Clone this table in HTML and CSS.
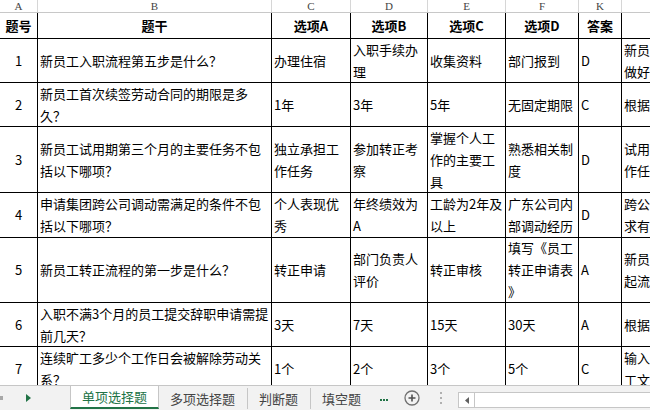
FILE: index.html
```html
<!DOCTYPE html>
<html lang="zh-CN">
<head>
<meta charset="utf-8">
<title>单项选择题</title>
<link rel="stylesheet" href="styles.css">
</head>
<body>
<div class="sheet">
  <div class="cols">
    <div>A</div><div>B</div><div>C</div><div>D</div><div>E</div><div>F</div><div>K</div><div></div>
  </div>
  <div class="grid">
    <div class="c h">题号</div><div class="c h">题干</div><div class="c h">选项A</div><div class="c h">选项B</div><div class="c h">选项C</div><div class="c h">选项D</div><div class="c h">答案</div><div class="c"></div>

    <div class="c n">1</div><div class="c">新员工入职流程第五步是什么？</div><div class="c">办理住宿</div><div class="c">入职手续办理</div><div class="c">收集资料</div><div class="c">部门报到</div><div class="c">D</div><div class="c l">新员工入职须先收集资料，<br>做好入职手续办理等事项</div>

    <div class="c n">2</div><div class="c">新员工首次续签劳动合同的期限是多久？</div><div class="c">1年</div><div class="c">3年</div><div class="c">5年</div><div class="c">无固定期限</div><div class="c">C</div><div class="c l">根据公司规定为无固定期限</div>

    <div class="c n">3</div><div class="c">新员工试用期第三个月的主要任务不包括以下哪项？</div><div class="c">独立承担工作任务</div><div class="c">参加转正考察</div><div class="c">掌握个人工作的主要工具</div><div class="c">熟悉相关制度</div><div class="c">D</div><div class="c l">试用期第三个月需独立承担工<br>作任务并参加转正考察</div>

    <div class="c n">4</div><div class="c">申请集团跨公司调动需满足的条件不包括以下哪项？</div><div class="c">个人表现优秀</div><div class="c">年终绩效为A</div><div class="c">工龄为2年及以上</div><div class="c">广东公司内部调动经历</div><div class="c">D</div><div class="c l">跨公司调动需满足工龄等要<br>求有关规定</div>

    <div class="c n">5</div><div class="c">新员工转正流程的第一步是什么？</div><div class="c">转正申请</div><div class="c">部门负责人评价</div><div class="c">转正审核</div><div class="c any">填写《员工转正申请表》</div><div class="c">A</div><div class="c l">新员工转正需先提交申请发<br>起流程</div>

    <div class="c n">6</div><div class="c">入职不满3个月的员工提交辞职申请需提前几天？</div><div class="c">3天</div><div class="c">7天</div><div class="c">15天</div><div class="c">30天</div><div class="c">A</div><div class="c l">根据规定需提前3天提交</div>

    <div class="c n">7</div><div class="c">连续旷工多少个工作日会被解除劳动关系？</div><div class="c">1个</div><div class="c">2个</div><div class="c">3个</div><div class="c">5个</div><div class="c">C</div><div class="c l">输入连续旷工3个工作日的员<br>工文件规定解除劳动关系</div>
  </div>
</div>

<div class="tabbar">
  <div class="nav">
    <span class="stub"></span>
    <svg class="next" width="5" height="8" viewBox="0 0 5 8"><path d="M0 0 L5 4 L0 8 Z" fill="#217346"/></svg>
  </div>
  <div class="tab active">单项选择题</div>
  <div class="tab">多项选择题</div>
  <span class="sep"></span>
  <div class="tab">判断题</div>
  <span class="sep"></span>
  <div class="tab">填空题</div>
  <svg class="more" width="9" height="3" viewBox="0 0 9 3"><rect x="0" y="0" width="2" height="2" fill="#217346"/><rect x="3" y="0" width="2" height="2" fill="#217346"/><rect x="6" y="0" width="2" height="2" fill="#217346"/></svg>
  <svg class="add" width="16" height="16" viewBox="0 0 16 16"><circle cx="8" cy="8" r="7" fill="none" stroke="#707070" stroke-width="1.3"/><path d="M8 4.5 V11.5 M4.5 8 H11.5" stroke="#505050" stroke-width="1.6"/></svg>
  <svg class="vdots" width="3" height="12" viewBox="0 0 3 12"><rect x="0" y="0" width="2" height="2" fill="#b0b0b0"/><rect x="0" y="5" width="2" height="2" fill="#b0b0b0"/><rect x="0" y="10" width="2" height="2" fill="#b0b0b0"/></svg>
  <div class="hscroll">
    <div class="lbtn"><svg width="4" height="7" viewBox="0 0 4 7"><path d="M4 0 L0 3.5 L4 7 Z" fill="#606060"/></svg></div>
  </div>
</div>
</body>
</html>
```
FILE: styles.css
```css
html, body {
  margin: 0;
  padding: 0;
}
body {
  width: 650px;
  height: 410px;
  overflow: hidden;
  background: #fff;
  font-family: "Noto Sans CJK SC", "Microsoft YaHei", sans-serif;
  color: #000;
}
.sheet {
  height: 385px;
  overflow: hidden;
}
.cols {
  display: grid;
  grid-template-columns: 37px 233px 78px 76px 77px 72px 42px 100px;
  column-gap: 1px;
  background: #d6d6d6;
  border-bottom: 1px solid #c8c8c8;
  height: 12px;
}
.cols > div {
  background: #fff;
  font: 11px/12px "Liberation Serif", "DejaVu Serif", serif;
  color: #444;
  text-align: center;
}
.grid {
  display: grid;
  grid-template-columns: 37px 233px 78px 76px 77px 72px 42px 100px;
  grid-template-rows: 25px 43px 43px 65px 44px 64px 43px 43px;
  gap: 1px;
  background: #000;
}
.c {
  background: #fff;
  display: flex;
  align-items: center;
  padding: 0 2px;
  font-size: 13px;
  line-height: 22px;
  overflow: hidden;
}
.h {
  justify-content: center;
  font-weight: bold;
}
.n {
  justify-content: center;
}
.l {
  white-space: nowrap;
}
.any {
  line-break: anywhere;
}
.tabbar {
  height: 24px;
  border-top: 1px solid #c6c6c6;
  background: #f2f2f2;
  display: flex;
  align-items: stretch;
  font-size: 13px;
  color: #444;
}
.nav {
  width: 70px;
  display: flex;
  align-items: center;
  flex: none;
}
.stub {
  width: 3px;
  height: 4px;
  background: #a8a8a8;
}
.next {
  margin-left: 23px;
}
.tab {
  display: flex;
  align-items: center;
  padding: 0 12px 0 11px;
  flex: none;
  white-space: nowrap;
}
.tab.active {
  padding: 0;
  justify-content: center;
  box-sizing: border-box;
  width: 89px;
  background: #fff;
  color: #217346;
  border-left: 1px solid #c6c6c6;
  border-right: 1px solid #c6c6c6;
  border-bottom: 2px solid #217346;
  height: 23px;
}
.sep {
  width: 1px;
  background: #c6c6c6;
  margin: 2px 0 1px;
  flex: none;
}
.more {
  align-self: flex-end;
  margin: 0 0 8px 7px;
  flex: none;
}
.add {
  align-self: center;
  margin-left: 15px;
  flex: none;
}
.vdots {
  align-self: center;
  margin-left: 20px;
  flex: none;
}
.hscroll {
  align-self: flex-start;
  margin-top: 6px;
  margin-left: 15px;
  height: 16px;
  box-sizing: border-box;
  flex: 1;
  margin-right: -20px;
  background: #fff;
  border: 1px solid #c6c6c6;
  display: flex;
}
.lbtn {
  width: 15px;
  border-right: 1px solid #c6c6c6;
  display: flex;
  align-items: center;
  justify-content: center;
}
```
